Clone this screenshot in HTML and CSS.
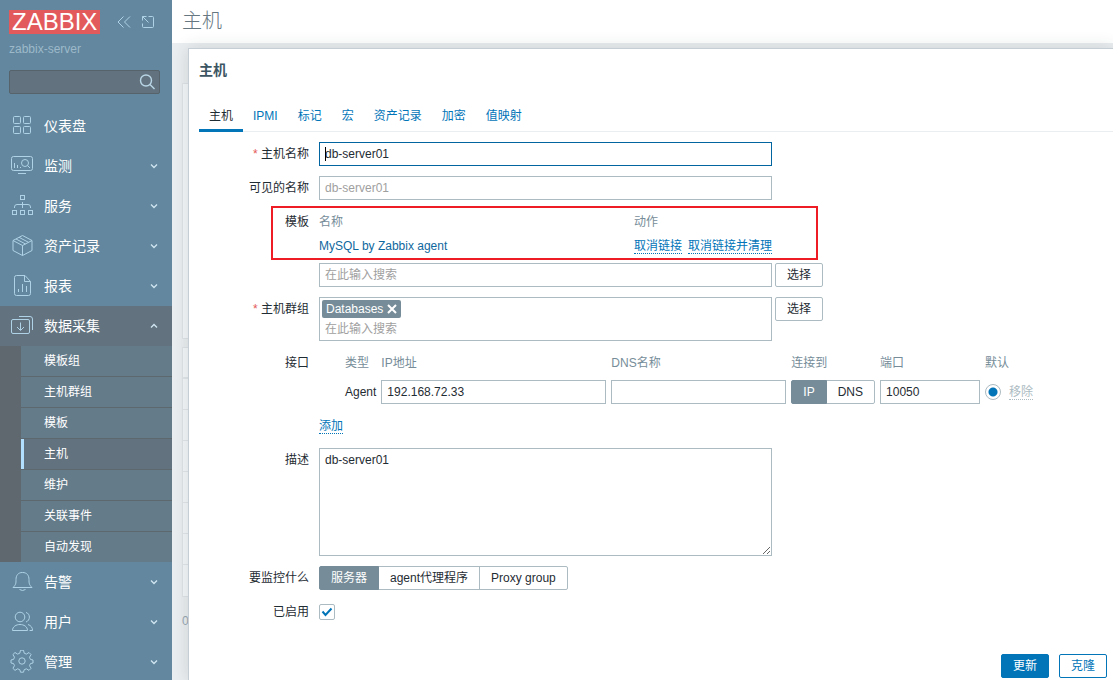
FILE: index.html
```html
<!DOCTYPE html>
<html lang="zh-CN">
<head>
<meta charset="utf-8">
<title>主机</title>
<link rel="stylesheet" href="styles.css">
</head>
<body>
<aside class="sidebar">
  <div class="brand">
    <a class="logo" href="#">ZABBIX</a>
    <button class="icon-button" type="button" aria-label="折叠"><svg width="16" height="16" viewBox="0 0 16 16"><path d="M7.500 2.500 2 8l5.500 5.500M14 2.500 8.500 8l5.500 5.500"/></svg></button>
    <button class="icon-button" type="button" aria-label="隐藏"><svg width="16" height="16" viewBox="0 0 16 16"><path d="M8.500 2.500h4q1 0 1 1v9q0 1-1 1h-9q-1 0-1-1V9.500M2.500 6.500v-4H6.500M2.500 2.500l6 6"/></svg></button>
  </div>
  <div class="server-name">zabbix-server</div>
  <form class="search">
    <input class="search-input" type="text" aria-label="搜索">
    <button class="search-button" type="button" aria-label="搜索"><svg width="18" height="18" viewBox="0 0 18 18"><circle cx="8" cy="7.500" r="5.500"/><path d="m12 11.500 4.500 4.500"/></svg></button>
  </form>
  <nav class="menu">
    <a class="menu-item" href="#"><svg class="menu-icon" viewBox="0 0 24 24"><rect x="3.500" y="2.500" width="7" height="7" rx="1"/><rect x="13.500" y="2.500" width="7" height="7" rx="1"/><rect x="3.500" y="12.500" width="7" height="7" rx="1"/><rect x="13.500" y="12.500" width="7" height="7" rx="1"/></svg><span class="menu-label">仪表盘</span></a>
    <a class="menu-item" href="#"><svg class="menu-icon" viewBox="0 0 24 24"><rect x="1.500" y="2.500" width="21" height="14" rx="2"/><path d="M8 19.500h8M4.500 14V9M7.500 14v-3M10.500 14v-1M17.500 11.500l2.500 2.500"/><circle cx="15" cy="9" r="3.500"/></svg><span class="menu-label">监测</span><svg class="chevron" viewBox="0 0 8 8"><path d="m1 2.500 3 3 3-3"/></svg></a>
    <a class="menu-item" href="#"><svg class="menu-icon" viewBox="0 0 24 24"><rect x="10.500" y="1.500" width="4" height="4"/><rect x="2.500" y="16.500" width="4" height="4"/><rect x="10.500" y="16.500" width="4" height="4"/><rect x="18.500" y="16.500" width="4" height="4"/><path d="M12.500 8v6M4.500 14v-1q0-2.500 2.500-2.500h11q2.500 0 2.500 2.500v1"/></svg><span class="menu-label">服务</span><svg class="chevron" viewBox="0 0 8 8"><path d="m1 2.500 3 3 3-3"/></svg></a>
    <a class="menu-item" href="#"><svg class="menu-icon" viewBox="0 0 24 24"><path d="m12.500 1.500 9.500 5v10l-9.500 5-9.500-5v-10zM3 6.500l9.500 5 9.500-5M12.500 11.500v10M6 5l9.500 5M9 3.300l9.500 5"/></svg><span class="menu-label">资产记录</span><svg class="chevron" viewBox="0 0 8 8"><path d="m1 2.500 3 3 3-3"/></svg></a>
    <a class="menu-item" href="#"><svg class="menu-icon" viewBox="0 0 24 24"><path d="M6.500 1.500h8.500l5.500 6v12q0 2-2 2h-12q-2 0-2-2v-16q0-2 2-2zM14.500 1.500v6h6M8.500 18v-3M12.500 18v-8M16.500 18v-6"/></svg><span class="menu-label">报表</span><svg class="chevron" viewBox="0 0 8 8"><path d="m1 2.500 3 3 3-3"/></svg></a>
    <a class="menu-item menu-item-open" href="#"><svg class="menu-icon" viewBox="0 0 24 24"><rect x="1.500" y="5.500" width="18" height="14" rx="1.500"/><path d="M9 2.500h11q2.500 0 2.500 2.500v11M10.500 8.500v7.500M7 13l3.500 3.500L14 13"/></svg><span class="menu-label">数据采集</span><svg class="chevron" viewBox="0 0 8 8"><path d="m1 5.500 3-3 3 3"/></svg></a>
    <div class="submenu">
      <a class="submenu-item" href="#">模板组</a>
      <a class="submenu-item" href="#">主机群组</a>
      <a class="submenu-item" href="#">模板</a>
      <a class="submenu-item submenu-item-current" href="#">主机</a>
      <a class="submenu-item" href="#">维护</a>
      <a class="submenu-item" href="#">关联事件</a>
      <a class="submenu-item" href="#">自动发现</a>
    </div>
    <a class="menu-item" href="#"><svg class="menu-icon" viewBox="0 0 24 24"><path d="M3 17.500h19c-3-3-3-4-3-8 0-4-2-7-6.500-7S6 5.500 6 9.500c0 4 0 5-3 8zM9.500 19.500q3 2 6 0"/></svg><span class="menu-label">告警</span><svg class="chevron" viewBox="0 0 8 8"><path d="m1 2.500 3 3 3-3"/></svg></a>
    <a class="menu-item" href="#"><svg class="menu-icon" viewBox="0 0 24 24"><circle cx="10" cy="7" r="4.800"/><path d="M2.500 20.500c0-8 15-8 15 0zM16 2.500c4.500 1 4.500 8 0 9.500M18 14.500q4.500 1.500 4.500 6h-3"/></svg><span class="menu-label">用户</span><svg class="chevron" viewBox="0 0 8 8"><path d="m1 2.500 3 3 3-3"/></svg></a>
    <a class="menu-item" href="#"><svg class="menu-icon" viewBox="0 0 24 24"><circle cx="12" cy="11" r="3.200"/><path d="M10.500 1h3l.7 3 2.200.9 2.600-1.600 2.100 2.100-1.600 2.600.9 2.200 2.600.6v3l-2.600.6-.9 2.100 1.600 2.600-2.100 2.100-2.600-1.600-2.200.9-.7 2.500h-3l-.7-2.500-2.200-.9L5 21.200 2.900 19.100l1.600-2.600-.9-2.100-2.600-.6v-3l2.600-.6.9-2.200L2.900 5.400 5 3.300l2.600 1.600L9.800 4z" transform="translate(0 -.8)"/></svg><span class="menu-label">管理</span><svg class="chevron" viewBox="0 0 8 8"><path d="m1 2.500 3 3 3-3"/></svg></a>
  </nav>
</aside>

<main class="page">
  <header class="page-header"><h1 class="page-title">主机</h1></header>
  <div class="page-body">
    <div class="panel filter-panel"></div>
    <div class="panel list-panel">
      <div class="list-row list-head"></div>
      <div class="list-row"></div><div class="list-row"></div><div class="list-row"></div><div class="list-row"></div><div class="list-row"></div><div class="list-row"></div><div class="list-row"></div>
    </div>
    <div class="list-count">0</div>
  </div>

  <section class="dialog" role="dialog" aria-labelledby="dialog-title">
    <h2 class="dialog-title" id="dialog-title">主机</h2>
    <nav class="tabs">
      <a class="tab tab-current" href="#">主机</a>
      <a class="tab" href="#">IPMI</a>
      <a class="tab" href="#">标记</a>
      <a class="tab" href="#">宏</a>
      <a class="tab" href="#">资产记录</a>
      <a class="tab" href="#">加密</a>
      <a class="tab" href="#">值映射</a>
    </nav>
    <form class="form">
      <div class="row">
        <label class="label required" for="host">主机名称</label>
        <div class="field focus-field"><input class="text-input wide focused" id="host" type="text" value="db-server01"><span class="caret"></span></div>
      </div>
      <div class="row">
        <label class="label" for="visible">可见的名称</label>
        <div class="field"><input class="text-input wide" id="visible" type="text" placeholder="db-server01"></div>
      </div>
      <div class="row highlighted">
        <label class="label" for="template-search">模板</label>
        <div class="field stack">
          <table class="template-table">
            <thead><tr><th class="template-name">名称</th><th>动作</th></tr></thead>
            <tbody><tr><td><a class="link" href="#">MySQL by Zabbix agent</a></td><td><div class="actions"><button class="link-button" type="button">取消链接</button><button class="link-button" type="button">取消链接并清理</button></div></td></tr></tbody>
          </table>
          <div class="picker"><input class="text-input wide" id="template-search" type="text" placeholder="在此输入搜索"><button class="button" type="button">选择</button></div>
        </div>
        <span class="highlight"></span>
      </div>
      <div class="row">
        <label class="label required" for="groups">主机群组</label>
        <div class="field picker">
          <div class="multiselect wide">
            <span class="chip">Databases<button class="chip-remove" type="button" aria-label="移除"><svg width="10" height="10" viewBox="0 0 10 10"><path d="m1 1 8 8M9 1 1 9"/></svg></button></span>
            <input class="multiselect-input" id="groups" type="text" placeholder="在此输入搜索">
          </div>
          <button class="button" type="button">选择</button>
        </div>
      </div>
      <div class="row">
        <span class="label">接口</span>
        <div class="field interfaces">
          <table class="interface-table">
            <thead><tr><th class="col-type">类型</th><th class="col-ip">IP地址</th><th class="col-dns">DNS名称</th><th>连接到</th><th class="col-port">端口</th><th>默认</th></tr></thead>
            <tbody><tr>
              <td class="col-type">Agent</td>
              <td class="col-ip"><input class="text-input" type="text" value="192.168.72.33" aria-label="IP地址"></td>
              <td class="col-dns"><input class="text-input" type="text" aria-label="DNS名称"></td>
              <td><div class="segments"><input class="segment-radio" type="radio" name="connect" id="use-ip" checked><label class="segment" for="use-ip">IP</label><input class="segment-radio" type="radio" name="connect" id="use-dns"><label class="segment" for="use-dns">DNS</label></div></td>
              <td class="col-port"><input class="text-input" type="text" value="10050" aria-label="端口"></td>
              <td><div class="default-cell"><input class="radio" type="radio" name="default" checked aria-label="默认"><button class="link-button disabled" type="button" disabled>移除</button></div></td>
            </tr></tbody>
          </table>
          <div class="add-line"><button class="link-button" type="button">添加</button></div>
        </div>
      </div>
      <div class="row">
        <label class="label" for="description">描述</label>
        <div class="field"><textarea class="textarea wide" id="description">db-server01</textarea></div>
      </div>
      <div class="row">
        <span class="label">要监控什么</span>
        <div class="field segments"><input class="segment-radio" type="radio" name="monitored" id="by-server" checked><label class="segment" for="by-server">服务器</label><input class="segment-radio" type="radio" name="monitored" id="by-proxy"><label class="segment" for="by-proxy">agent代理程序</label><input class="segment-radio" type="radio" name="monitored" id="by-group"><label class="segment" for="by-group">Proxy group</label></div>
      </div>
      <div class="row">
        <label class="label" for="enabled">已启用</label>
        <div class="field check-line"><span class="check"><input class="checkbox" id="enabled" type="checkbox" checked><svg class="check-mark" viewBox="0 0 16 16"><path d="m3.500 7.500 3 3.500 6-6.500"/></svg></span></div>
      </div>
    </form>
    <footer class="dialog-footer">
      <button class="button button-primary" type="submit">更新</button>
      <button class="button button-outline" type="button">克隆</button>
    </footer>
  </section>
</main>
</body>
</html>
```
FILE: styles.css
```css
* { box-sizing: border-box; }

body {
  display: flex;
  height: 100vh;
  margin: 0;
  overflow: hidden;
  font: 12px/24px "Liberation Sans", "Noto Sans CJK SC", sans-serif;
  color: #1f2c33;
}

button, input, textarea { font: inherit; color: inherit; }
button { cursor: pointer; }
a { text-decoration: none; }
svg { fill: none; stroke: currentColor; }

/* Sidebar */
.sidebar {
  flex: none;
  width: 172px;
  overflow: hidden;
  background: #62879e;
  color: #fff;
}
.brand { display: flex; align-items: center; gap: 8px; padding: 10px 0 0 9px; }
.logo {
  height: 24px;
  margin-right: 8px;
  padding: 0 3px;
  background: #e35a5c;
  color: #fff;
  font-size: 24px;
  line-height: 24px;
}
.icon-button {
  display: flex;
  padding: 0;
  border: 0;
  background: none;
  color: #b0d2e6;
}
.server-name { padding: 3px 9px 0; color: #9db9ca; }
.search {
  display: flex;
  align-items: center;
  height: 24px;
  margin: 9px 12px 12px 9px;
  padding-right: 3px;
  border: 1px solid #56636b;
  border-radius: 2px;
  background: #62737f;
}
.search-input { flex: 1; min-width: 0; height: 22px; border: 0; outline: 0; background: none; }
.search-button { display: flex; padding: 0; border: 0; background: none; color: #b9d6e6; stroke-width: 1.4; }
.menu-item {
  display: flex;
  align-items: center;
  height: 40px;
  padding: 0 14px 0 10px;
  color: #fff;
  font-size: 14px;
}
.menu-item-open { background: #62737f; }
.menu-icon { width: 24px; height: 24px; margin-right: 10px; color: #b0d2e6; }
.menu-label { flex: 1; }
.chevron { width: 8px; height: 8px; color: #cfe4f0; stroke-width: 1.4; }
.submenu { border-left: 21px solid #5e686e; background: #647b8a; }
.submenu-item {
  display: block;
  height: 30px;
  padding-left: 23px;
  color: #fff;
  line-height: 30px;
}
.submenu-item + .submenu-item { height: 31px; border-top: 1px solid #5c676e; }
.submenu-item-current { background: #62737f; box-shadow: inset 3px 0 #b3dfff; }

/* Page behind the dialog */
.page {
  position: relative;
  flex: 1;
  min-width: 0;
  overflow: hidden;
  background: #ebeef0;
}
.page-header { height: 43px; padding: 0 10px; background: #fff; }
.page-title { margin: 0; color: #667782; font-size: 20px; font-weight: 300; line-height: 42px; }
.page-body { display: flex; flex-direction: column; padding: 40px 10px 0; }
.panel { border: 1px solid #dfe4e7; background: #f6f8f9; }
.filter-panel { height: 256px; margin-bottom: 8px; }
.list-row { height: 31px; border-bottom: 1px solid #e2e7ea; }
.list-head { border-bottom-width: 2px; }
.list-row:last-child { border-bottom: 0; }
.list-count { margin-top: 12px; color: #9aa8b0; }

/* Dialog */
.dialog {
  position: absolute;
  top: 48px;
  right: 0;
  bottom: 0;
  left: 16px;
  border: solid #c4ced4;
  border-width: 1px 0 0 1px;
  background: #fff;
  box-shadow: 0 0 16px rgba(30, 50, 60, 0.16);
}
.dialog-title {
  margin: 0;
  padding: 9px 10px 0;
  color: #3c5563;
  font-size: 14px;
  font-weight: 700;
  line-height: 24px;
}
.tabs { display: flex; margin: 17px 0 10px 10px; border-bottom: 1px solid #ebeef0; }
.tab { height: 33px; margin-bottom: -1px; padding: 5px 10px 0; color: #0275b8; }
.tab-current { border-bottom: 3px solid #0275b8; color: #1f2c33; }

.form { display: flex; flex-direction: column; gap: 10px; padding-left: 9px; }
.row { display: flex; align-items: flex-start; gap: 10px; }
.label { flex: none; width: 111px; text-align: right; }
.required::before { content: "* "; color: #e45959; }
.field { min-width: 0; }
.wide { width: 453px; }

.text-input, .textarea, .multiselect {
  display: block;
  border: 1px solid #acbbc2;
  outline: 0;
  border-radius: 0;
  background: #fff;
}
.text-input { height: 24px; padding: 0 5px; }
.textarea { height: 108px; padding: 4px 5px; line-height: 14px; }
.focused { border-color: #02659f; }
::placeholder { color: #9f9f9f; opacity: 1; }
.focus-field { position: relative; }
.caret { position: absolute; top: 5px; left: 6px; width: 1px; height: 14px; background: #000; }

.stack { display: flex; flex-direction: column; gap: 5px; }
.template-table { width: 453px; border-collapse: collapse; }
th, td { height: 24px; padding: 0; text-align: left; font-weight: 400; }
th { color: #768d99; }
.template-name { width: 315px; }
.link { color: #0f689e; }
.actions { display: flex; gap: 6px; }
.link-button {
  height: 15px;
  padding: 0;
  border: 0;
  border-bottom: 1px dotted #0275b8;
  background: none;
  color: #0275b8;
  line-height: 14px;
}
.link-button.disabled { border-color: #acbbc2; color: #acbbc2; }

.highlighted { position: relative; }
.highlight {
  position: absolute;
  top: -4px;
  left: 73px;
  width: 547px;
  height: 54px;
  border: 2px solid #ee1c25;
  pointer-events: none;
}

.picker { display: flex; align-items: flex-start; gap: 3px; }
.button {
  height: 24px;
  padding: 0 11px;
  border: 1px solid #acbbc2;
  border-radius: 2px;
  background: #fff;
  line-height: 22px;
}
.multiselect { height: 44px; padding: 2px; }
.chip {
  display: flex;
  align-items: center;
  width: max-content;
  height: 18px;
  padding: 0 4px;
  gap: 4px;
  border-radius: 2px;
  background: #768d99;
  color: #fff;
  line-height: 18px;
}
.chip-remove { display: flex; padding: 0; border: 0; background: none; stroke-width: 2; }
.multiselect-input {
  display: block;
  width: 100%;
  height: 21px;
  padding: 0 3px;
  border: 0;
  outline: 0;
  background: none;
}

.interfaces { padding-left: 26px; }
.interface-table { border-collapse: collapse; }
.interface-table th, .interface-table td { padding-right: 5px; white-space: nowrap; }
.interface-table td { padding-top: 5px; }
.col-type { width: 36px; }
.interface-table .text-input { width: 100%; }
.col-ip { width: 230px; min-width: 230px; }
.col-dns { width: 180px; min-width: 180px; }
.col-port { width: 105px; min-width: 105px; }
.default-cell { display: flex; align-items: center; gap: 8px; }
.interface-table .radio {
  appearance: none;
  display: block;
  width: 16px;
  height: 16px;
  margin: 0;
  border: 1px solid #acbbc2;
  border-radius: 50%;
  background: radial-gradient(circle, #0275b8 4px, #fff 5px);
}
.add-line { display: flex; align-items: center; height: 24px; margin: 10px 0 0 -26px; }

.segments { display: flex; }
.segment-radio { position: absolute; opacity: 0; pointer-events: none; }
.segment {
  height: 24px;
  margin-left: -1px;
  padding: 0 11px;
  border: 1px solid #acbbc2;
  line-height: 22px;
}
.segment:first-of-type { margin-left: 0; border-radius: 2px 0 0 2px; }
.segment:last-of-type { border-radius: 0 2px 2px 0; }
.segment-radio:checked + .segment { z-index: 1; border-color: #768d99; background: #768d99; color: #fff; }

.check-line { display: flex; align-items: center; height: 24px; }
.check { position: relative; display: flex; }
.checkbox {
  appearance: none;
  width: 16px;
  height: 16px;
  margin: 0;
  border: 1px solid #acbbc2;
  border-radius: 2px;
  background: #fff;
}
.check-mark {
  position: absolute;
  inset: 0;
  color: #0275b8;
  stroke-width: 2;
  pointer-events: none;
}

.dialog-footer { display: flex; justify-content: flex-end; gap: 10px; margin-top: 30px; padding-right: 6px; }
.button-primary { border-color: #0275b8; background: #0275b8; color: #fff; }
.button-outline { border-color: #0275b8; color: #0275b8; }
```
